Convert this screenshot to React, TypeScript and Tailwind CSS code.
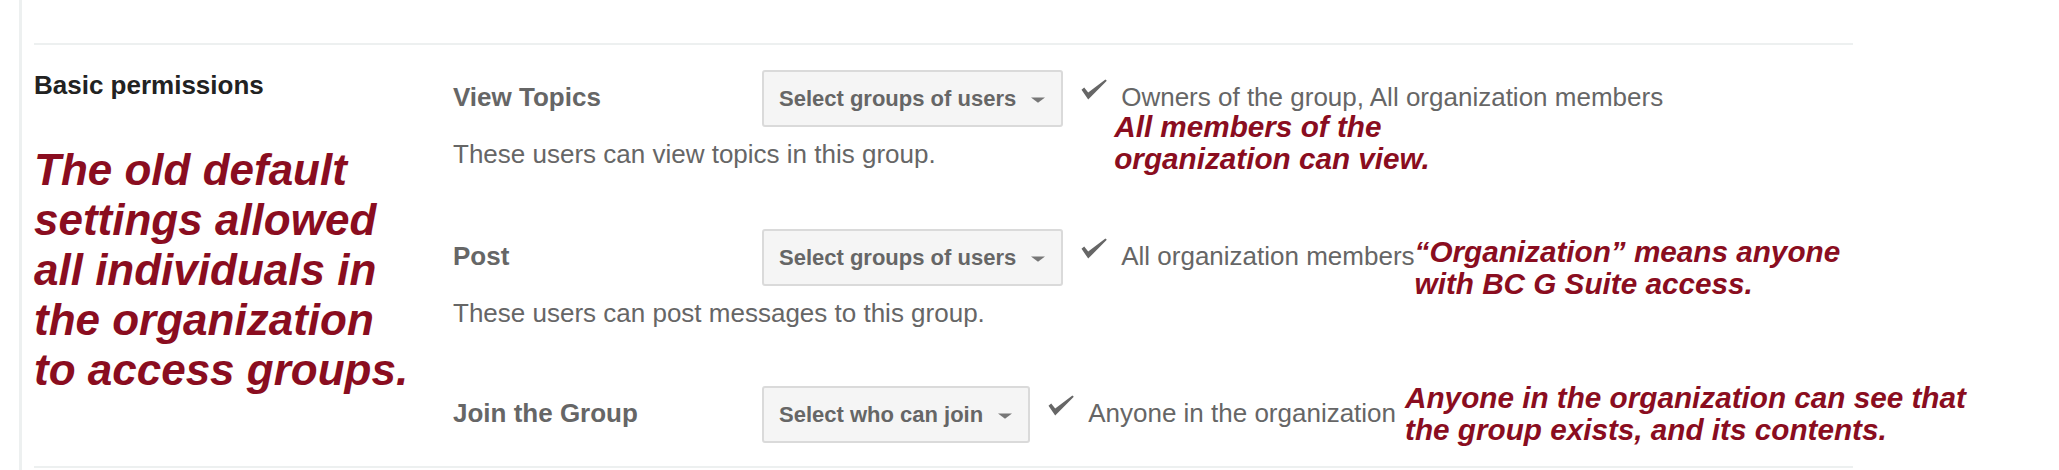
import React from "react";

const Check = () => (
  <svg width="26" height="21" viewBox="0 0 26 21" className="block">
    <path d="M0.5 10.8 L3.2 8.6 L7.2 13.4 L24.4 0.4 L25.8 1.8 L7.2 20.6 Z" fill="#666666" />
  </svg>
);

const Arrow = () => (
  <svg width="14" height="6" viewBox="0 0 14 6" className="block ml-[15px] mt-[2px]">
    <polygon points="0,0.5 14,0.5 7,5.8" fill="#777777" />
  </svg>
);

const Dropdown = ({ text }: { text: string }) => (
  <div className="h-[57px] shrink-0 flex items-center border-2 border-[#dadada] bg-[#f5f5f5] rounded-[3px] pl-[15px] pr-[16px] text-[22px] leading-[26px] font-bold text-[#666] whitespace-nowrap">
    <span>{text}</span>
    <Arrow />
  </div>
);

const red = "text-[#8a0d20] font-bold italic";

export default function App() {
  return (
    <div className="w-[2059px] h-[470px] bg-white overflow-hidden font-['Liberation_Sans',Arial,sans-serif]">
      <div className="h-full ml-[19px] border-l-[3px] border-[#edf0f0] pl-[12px] pt-[43px]">
        <div className="w-[1819px] h-[425px] border-y-2 border-[#edf0f0] flex">
          {/* left column */}
          <div className="w-[419px] shrink-0 pt-[25px]">
            <div className="text-[26px] leading-[30px] font-bold text-[#222]">Basic permissions</div>
            <div className={`mt-[45px] text-[44px] leading-[50px] ${red} whitespace-nowrap`}>
              <div>The old default</div>
              <div>settings allowed</div>
              <div>all individuals in</div>
              <div>the organization</div>
              <div>to access groups.</div>
            </div>
          </div>

          {/* right column */}
          <div className="flex-1 flex flex-col pt-[25px] text-[#666] whitespace-nowrap">
            {/* row 1 */}
            <div className="flex items-start h-[57px]">
              <div className="w-[309px] shrink-0 mt-[12px] text-[26px] leading-[30px] font-bold">View Topics</div>
              <Dropdown text="Select groups of users" />
              <div className="ml-[18px] mt-[9px] shrink-0">
                <Check />
              </div>
              <div className="ml-[14px] mt-[12px] flex flex-col shrink-0">
                <div className="text-[26px] leading-[30px]">Owners of the group, All organization members</div>
                <div className={`-mt-[1px] -ml-[7px] text-[29.7px] leading-[32px] ${red}`}>
                  <div>All members of the</div>
                  <div>organization can view.</div>
                </div>
              </div>
            </div>
            <div className="mt-[12px] text-[26px] leading-[30px]">These users can view topics in this group.</div>

            {/* row 2 */}
            <div className="mt-[60px] flex items-start h-[57px]">
              <div className="w-[309px] shrink-0 mt-[12px] text-[26px] leading-[30px] font-bold">Post</div>
              <Dropdown text="Select groups of users" />
              <div className="ml-[18px] mt-[9px] shrink-0">
                <Check />
              </div>
              <div className="ml-[14px] mt-[12px] shrink-0 text-[26px] leading-[30px]">All organization members</div>
              <div className={`mt-[7px] shrink-0 text-[29.7px] leading-[32px] ${red}`}>
                <div>“Organization” means anyone</div>
                <div>with BC G Suite access.</div>
              </div>
            </div>
            <div className="mt-[12px] text-[26px] leading-[30px]">These users can post messages to this group.</div>

            {/* row 3 */}
            <div className="mt-[58px] flex items-start h-[57px]">
              <div className="w-[309px] shrink-0 mt-[12px] text-[26px] leading-[30px] font-bold">Join the Group</div>
              <Dropdown text="Select who can join" />
              <div className="ml-[18px] mt-[9px] shrink-0">
                <Check />
              </div>
              <div className="ml-[14px] mt-[12px] shrink-0 text-[26px] leading-[30px]">Anyone in the organization</div>
              <div className={`ml-[9px] -mt-[4px] shrink-0 text-[29.7px] leading-[32px] ${red}`}>
                <div>Anyone in the organization can see that</div>
                <div>the group exists, and its contents.</div>
              </div>
            </div>
          </div>
        </div>
      </div>
    </div>
  );
}
